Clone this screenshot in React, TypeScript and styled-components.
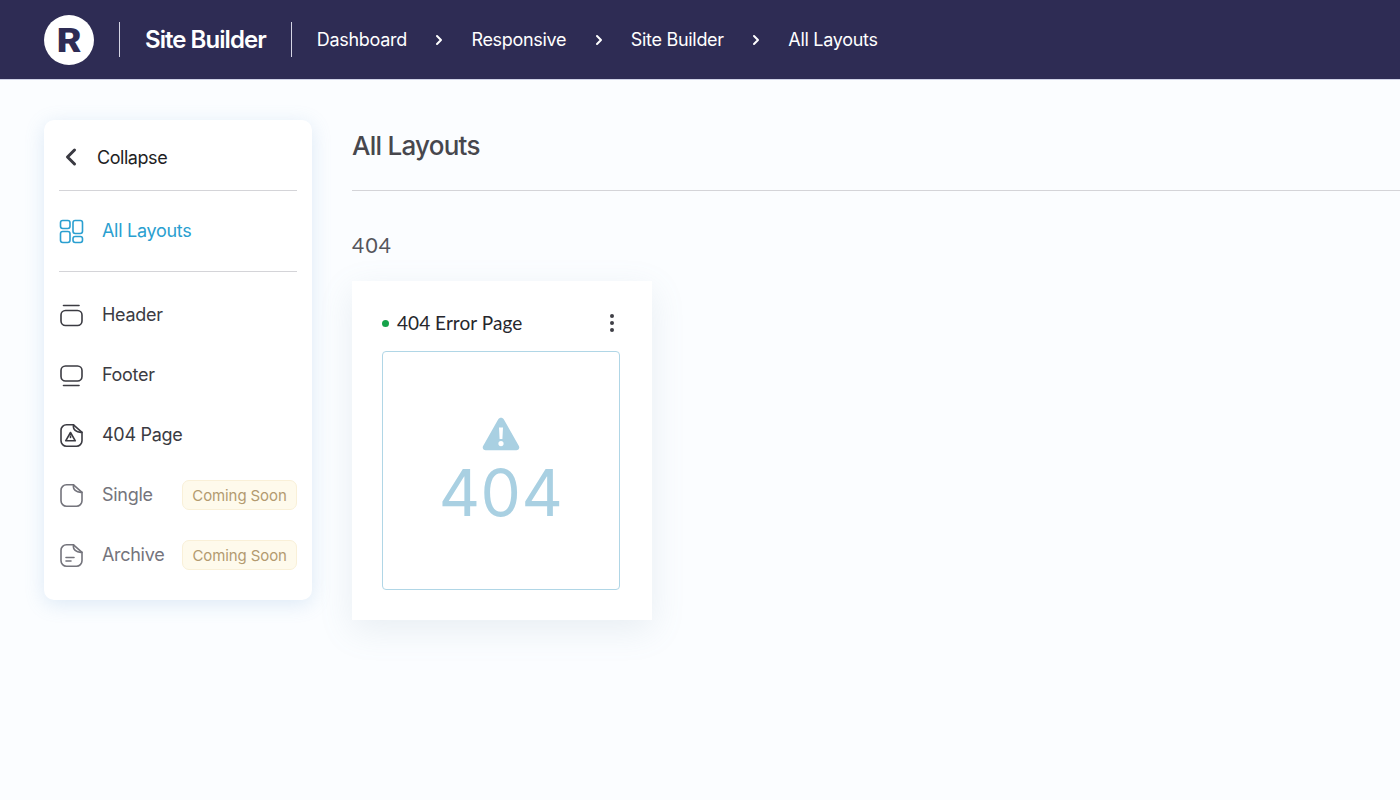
import styled, { createGlobalStyle } from "styled-components";
import { ChevronLeft, ChevronRight } from "lucide-react";

const Global = createGlobalStyle`
html, body { margin: 0; padding: 0; }
body { background: #fbfdff; font-family: "Inter", "Liberation Sans", sans-serif; }
* { box-sizing: border-box; }
`;

const TopBar = styled.header`
height: 80px;
background: #2e2c54;
border-bottom: 1px solid #cfd2e6;
display: flex;
align-items: center;
padding-left: 44px;
`;

const Logo = styled.div`
width: 50px;
height: 50px;
border-radius: 50%;
background: #fff;
color: #2e2c54;
display: flex;
align-items: center;
justify-content: center;
font-family: "Roboto", sans-serif;
font-weight: 900;
font-size: 34px;
line-height: 1;
`;

const LogoLetter = styled.span`
display: block;
transform: scaleX(1.12);
`;

const BarRule = styled.span`
width: 1px;
height: 35px;
background: #d5d5e4;
`;

const LogoRule = styled(BarRule)`
margin-left: 25px;
`;

const Brand = styled.div`
margin: 0 25px;
color: #fff;
font-size: 24px;
font-weight: 600;
letter-spacing: -0.95px;
white-space: nowrap;
`;

const Crumbs = styled.nav`
display: flex;
align-items: center;
margin-left: 25px;
color: #fff;
font-size: 18px;
letter-spacing: -0.3px;
`;

const CrumbArrow = styled.span`
display: flex;
width: 64.5px;
justify-content: center;
color: #fff;
`;

const Page = styled.div`
display: flex;
align-items: flex-start;
gap: 40px;
padding: 40px 0 60px 44px;
`;

const Sidebar = styled.aside`
width: 268px;
height: 480px;
flex: none;
background: #fff;
border-radius: 10px;
box-shadow: 0 4px 20px rgba(100, 155, 210, 0.2);
padding: 0 15px;
`;

const CollapseRow = styled.div`
height: 71px;
display: flex;
align-items: center;
gap: 12px;
padding-top: 4px;
color: #1e1e24;
font-size: 18px;
letter-spacing: -0.45px;
border-bottom: 1px solid #d4d4d8;
svg { color: #3a3a42; margin-left: -2px; }
`;

const ActiveGroup = styled.div`
height: 81px;
display: flex;
align-items: center;
border-bottom: 1px solid #d4d4d8;
`;

const NavList = styled.div`
padding-top: 13px;
`;

const NavItem = styled.div<{ $tone: "active" | "normal" | "muted"; $tall?: boolean }>`
height: ${({ $tall }) => ($tall ? "60px" : "auto")};
width: 100%;
display: flex;
align-items: center;
gap: 18px;
font-size: 18px;
letter-spacing: -0.3px;
color: ${({ $tone }) =>
  $tone === "active" ? "#2a9fd0" : $tone === "muted" ? "#74747c" : "#3b3b42"};
`;

const NavIcon = styled.svg`
width: 25px;
height: 25px;
flex: none;
fill: none;
stroke: currentColor;
stroke-width: 1.6;
stroke-linecap: round;
stroke-linejoin: round;
`;

const NavLabel = styled.span`
flex: 1;
padding-bottom: 2px;
`;

const Soon = styled.span`
height: 30px;
width: 115px;
display: flex;
align-items: center;
justify-content: center;
background: #fefaec;
border: 1px solid #f9f0d8;
border-radius: 7px;
color: #b39a70;
font-size: 15px;
letter-spacing: -0.1px;
`;

const Main = styled.main`
flex: 1;
`;

const TitleBar = styled.div`
height: 71px;
border-bottom: 1px solid #d4d4d8;
padding-top: 10px;
`;

const PageTitle = styled.h1`
margin: 0;
color: #47474d;
font-size: 26px;
line-height: 32px;
font-weight: 500;
letter-spacing: -0.75px;
`;

const SectionTitle = styled.h2`
margin: 42px 0 24px;
color: #55555b;
font-family: "Lato", sans-serif;
font-size: 21px;
line-height: 24px;
font-weight: 400;
letter-spacing: 1.2px;
`;

const Card = styled.article`
width: 300px;
height: 339px;
background: #fff;
box-shadow: 0 10px 32px rgba(120, 150, 170, 0.14);
padding: 29px 32px 0 30px;
`;

const CardHead = styled.div`
height: 26px;
display: flex;
align-items: center;
gap: 8px;
margin-bottom: 15px;
`;

const StatusDot = styled.span`
width: 7px;
height: 7px;
border-radius: 50%;
background: #16a34a;
`;

const CardName = styled.span`
flex: 1;
color: #26262c;
font-family: "Lato", sans-serif;
font-size: 19px;
letter-spacing: 0.05px;
padding-bottom: 2px;
`;

const Dots = styled.svg`
width: 16px;
height: 20px;
fill: #3f3f46;
`;

const Preview = styled.div`
height: 239px;
border: 1.5px solid #b0d6e6;
border-radius: 4px;
display: flex;
flex-direction: column;
align-items: center;
justify-content: flex-start;
color: #a9d0e2;
padding-top: 65px;
`;

const WarnIcon = styled.svg`
width: 38px;
height: 34px;
fill: currentColor;
flex: none;
`;

const BigCode = styled.div`
margin-top: 9px;
font-family: "Inter", sans-serif;
font-size: 64px;
line-height: 66px;
font-weight: 400;
letter-spacing: 0.5px;
`;

const iconPaths: Record<string, React.ReactNode> = {
  layouts: (
    <>
      <rect x="1.500" y="1.500" width="9.500" height="8" rx="2.200" />
      <rect x="1.500" y="12.500" width="9.500" height="11" rx="2.200" />
      <rect x="14" y="1.500" width="9.500" height="13" rx="2.200" />
      <rect x="14" y="17.500" width="9.500" height="6" rx="2.200" />
    </>
  ),
  header: (
    <>
      <path d="M4.500 2.500h15.500" />
      <rect x="2" y="7.500" width="21" height="15" rx="4.500" />
    </>
  ),
  footer: (
    <>
      <rect x="2" y="3" width="21" height="15" rx="4.500" />
      <path d="M4.500 22.500h15.500" />
    </>
  ),
  page: (
    <>
      <path d="M14.500 1.800H7.500a5.500 5.500 0 0 0-5.500 5.500v10.500a5.500 5.500 0 0 0 5.500 5.500h10a5.500 5.500 0 0 0 5.500-5.500v-8.500z" />
      <path d="M14.500 1.800c-.8 4.500 2.500 8 8.500 7.500" />
    </>
  ),
};

const ErrorMark = (
  <>
    <path d="M11.500 9.500l4.800 8.300H6.700z" />
    <path d="M11.500 13v1.500" />
  </>
);

const LineMark = <path d="M7 14.500h8M7 18h5" />;

function Icon({ name, children }: { name: string; children?: React.ReactNode }) {
  return (
    <NavIcon viewBox="0 0 25 25">
      {iconPaths[name]}
      {children}
    </NavIcon>
  );
}

const crumbs = ["Dashboard", "Responsive", "Site Builder", "All Layouts"];

export default function App() {
  return (
    <>
      <Global />
      <TopBar>
        <Logo>
          <LogoLetter>R</LogoLetter>
        </Logo>
        <LogoRule />
        <Brand>Site Builder</Brand>
        <BarRule />
        <Crumbs>
          {crumbs.map((c, i) => (
            <span key={c} style={{ display: "contents" }}>
              <span>{c}</span>
              {i < crumbs.length - 1 && (
                <CrumbArrow>
                  <ChevronRight size={16} strokeWidth={3} />
                </CrumbArrow>
              )}
            </span>
          ))}
        </Crumbs>
      </TopBar>
      <Page>
        <Sidebar>
          <CollapseRow>
            <ChevronLeft size={28} strokeWidth={2.6} />
            Collapse
          </CollapseRow>
          <ActiveGroup>
            <NavItem $tone="active">
              <Icon name="layouts" />
              <NavLabel>All Layouts</NavLabel>
            </NavItem>
          </ActiveGroup>
          <NavList>
            <NavItem $tone="normal" $tall>
              <Icon name="header" />
              <NavLabel>Header</NavLabel>
            </NavItem>
            <NavItem $tone="normal" $tall>
              <Icon name="footer" />
              <NavLabel>Footer</NavLabel>
            </NavItem>
            <NavItem $tone="normal" $tall>
              <Icon name="page">{ErrorMark}</Icon>
              <NavLabel>404 Page</NavLabel>
            </NavItem>
            <NavItem $tone="muted" $tall>
              <Icon name="page" />
              <NavLabel>Single</NavLabel>
              <Soon>Coming Soon</Soon>
            </NavItem>
            <NavItem $tone="muted" $tall>
              <Icon name="page">{LineMark}</Icon>
              <NavLabel>Archive</NavLabel>
              <Soon>Coming Soon</Soon>
            </NavItem>
          </NavList>
        </Sidebar>
        <Main>
          <TitleBar>
            <PageTitle>All Layouts</PageTitle>
          </TitleBar>
          <SectionTitle>404</SectionTitle>
          <Card>
            <CardHead>
              <StatusDot />
              <CardName>404 Error Page</CardName>
              <Dots viewBox="0 0 16 20">
                <circle cx="8" cy="3" r="2" />
                <circle cx="8" cy="10" r="2" />
                <circle cx="8" cy="17" r="2" />
              </Dots>
            </CardHead>
            <Preview>
              <WarnIcon viewBox="0 0 38 34">
                <path
                  fillRule="evenodd"
                  d="M19 .8c1.200 0 2.200.6 2.900 1.700l15 26.500c1.100 2.100-.3 4.300-2.600 4.300H3.700c-2.300 0-3.700-2.200-2.600-4.300l15-26.500C16.800 1.400 17.800.8 19 .8zM17 10.500l.6 11.500h2.800l.6-11.500zM19 24a2.600 2.600 0 1 0 0 5.200A2.600 2.600 0 0 0 19 24z"
                />
              </WarnIcon>
              <BigCode>404</BigCode>
            </Preview>
          </Card>
        </Main>
      </Page>
    </>
  );
}
